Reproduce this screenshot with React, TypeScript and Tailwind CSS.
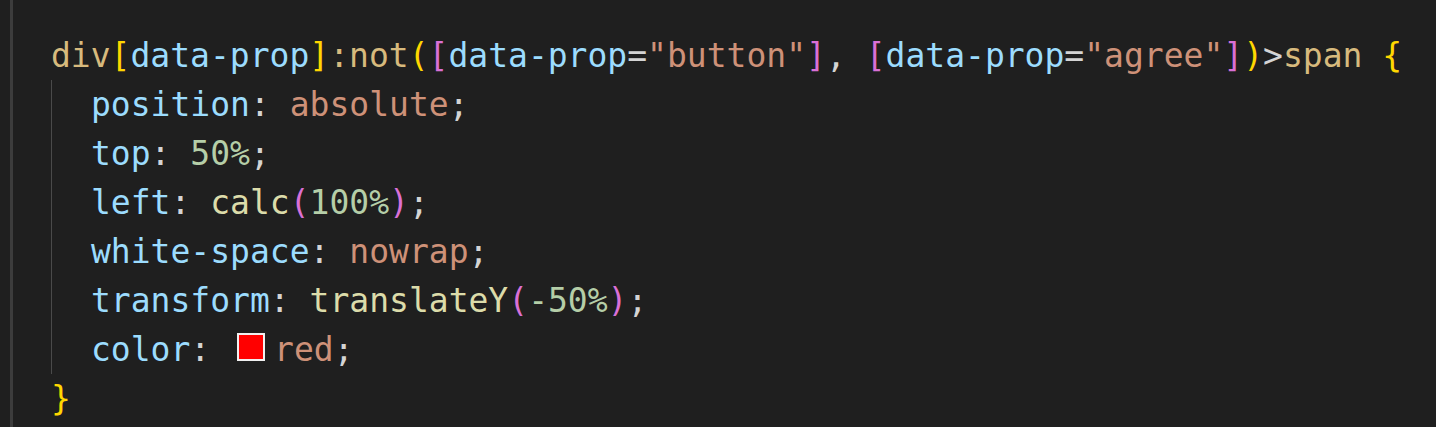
import React from "react";

const C = {
  tag: "text-[#d7ba7d]",
  attr: "text-[#9cdcfe]",
  str: "text-[#ce9178]",
  num: "text-[#b5cea8]",
  fn: "text-[#dcdcaa]",
  punc: "text-[#d4d4d4]",
  gold: "text-[#ffd700]",
  pink: "text-[#da70d6]",
};

const Line = ({ children }: { children: React.ReactNode }) => (
  <div className="h-[49px] flex items-center whitespace-pre">{children}</div>
);

const App = () => {
  return (
    <div
      className="w-[1436px] h-[427px] bg-[#1f1f1f] flex overflow-hidden"
      style={{ fontFamily: '"DejaVu Sans Mono", "Liberation Mono", monospace' }}
    >
      <div className="w-[10px]" />
      <div className="w-[3px] h-full bg-[#3c3c3c]" />
      <div className="pl-[38px] pt-[31px] text-[33px] leading-[49px]">
        <Line>
          <span className={C.tag}>div</span>
          <span className={C.gold}>[</span>
          <span className={C.attr}>data-prop</span>
          <span className={C.gold}>]</span>
          <span className={C.tag}>:not</span>
          <span className={C.gold}>(</span>
          <span className={C.pink}>[</span>
          <span className={C.attr}>data-prop</span>
          <span className={C.punc}>=</span>
          <span className={C.str}>"button"</span>
          <span className={C.pink}>]</span>
          <span className={C.punc}>, </span>
          <span className={C.pink}>[</span>
          <span className={C.attr}>data-prop</span>
          <span className={C.punc}>=</span>
          <span className={C.str}>"agree"</span>
          <span className={C.pink}>]</span>
          <span className={C.gold}>)</span>
          <span className={C.punc}>&gt;</span>
          <span className={C.tag}>span </span>
          <span className={C.gold}>{"{"}</span>
        </Line>
        <div className="border-l border-[#4a4a4a] pl-[39px]">
          <Line>
            <span className={C.attr}>position</span>
            <span className={C.punc}>: </span>
            <span className={C.str}>absolute</span>
            <span className={C.punc}>;</span>
          </Line>
          <Line>
            <span className={C.attr}>top</span>
            <span className={C.punc}>: </span>
            <span className={C.num}>50%</span>
            <span className={C.punc}>;</span>
          </Line>
          <Line>
            <span className={C.attr}>left</span>
            <span className={C.punc}>: </span>
            <span className={C.fn}>calc</span>
            <span className={C.pink}>(</span>
            <span className={C.num}>100%</span>
            <span className={C.pink}>)</span>
            <span className={C.punc}>;</span>
          </Line>
          <Line>
            <span className={C.attr}>white-space</span>
            <span className={C.punc}>: </span>
            <span className={C.str}>nowrap</span>
            <span className={C.punc}>;</span>
          </Line>
          <Line>
            <span className={C.attr}>transform</span>
            <span className={C.punc}>: </span>
            <span className={C.fn}>translateY</span>
            <span className={C.pink}>(</span>
            <span className={C.num}>-50%</span>
            <span className={C.pink}>)</span>
            <span className={C.punc}>;</span>
          </Line>
          <Line>
            <span className={C.attr}>color</span>
            <span className={C.punc}>: </span>
            <span className="inline-block w-[28px] h-[28px] border-2 border-[#f0f0f0] bg-[#ff0000] ml-[7px] mr-[9px] mt-[-5px]" />
            <span className={C.str}>red</span>
            <span className={C.punc}>;</span>
          </Line>
        </div>
        <Line>
          <span className={C.gold}>{"}"}</span>
        </Line>
      </div>
    </div>
  );
};

export default App;
